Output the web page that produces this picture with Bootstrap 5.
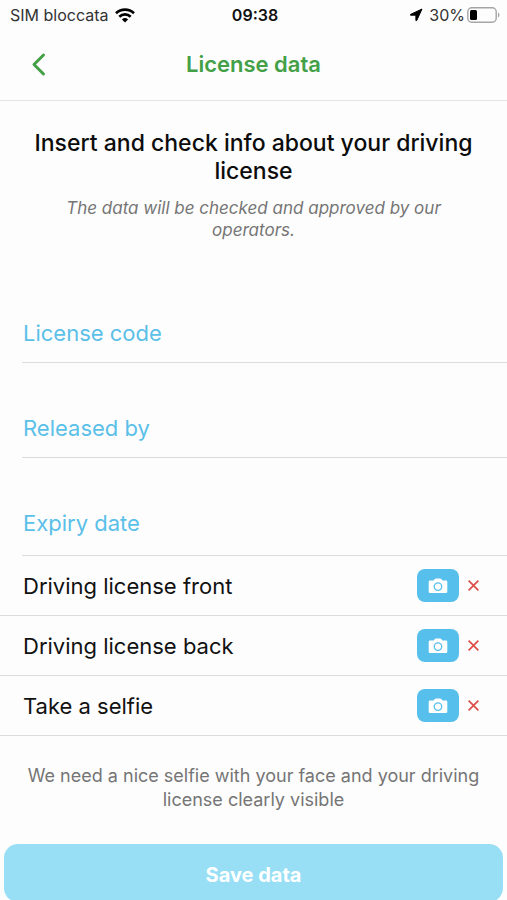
<!DOCTYPE html>
<html lang="en">
<head>
<meta charset="utf-8">
<meta name="viewport" content="width=device-width, initial-scale=1">
<title>License data</title>
<link href="https://cdn.jsdelivr.net/npm/bootstrap@5.3.0/dist/css/bootstrap.min.css" rel="stylesheet">
<style>
  body { font-family: Inter, "Liberation Sans", sans-serif; background: #fdfdfd; color: #111; }
  svg { display: block; }
  .status-bar { height: 30px; font-size: 16px; line-height: 20px; padding: 0 7px 0 10px; color: #333; }
  .status-group { gap: 6px; }
  .battery-group { gap: 2px; }
  .status-time { font-weight: 600; color: #111; }
  .app-header { height: 71px; padding: 0 24px 2px; border-bottom: 1px solid #e4e4e6; }
  .side-slot { width: 32px; height: 32px; }
  .app-title { font-size: 22px; line-height: 28px; font-weight: 600; color: #43a047; }
  .intro { padding: 28px 24px 27px; }
  .intro-title { font-size: 23px; line-height: 28px; font-weight: 500; color: #0c0c0c; margin-bottom: 12px; }
  .intro-note { font-size: 17px; line-height: 22px; color: #757575; padding: 0 24px; }
  .field { margin-left: 22px; padding-top: 35px; border-bottom: 1px solid #dcdcde; }
  .field:last-child { padding-bottom: 3px; }
  .field > * { grid-area: 1 / 1; }
  .field label { font-size: 22px; line-height: 28px; color: #5bc0e8; padding-left: 1px; pointer-events: none; }
  .field input { height: 59px; font-size: 22px; }
  .field input:focus + label, .field input:not(:placeholder-shown) + label { visibility: hidden; }
  .photo-row { height: 60px; padding: 0 27px 0 23px; border-bottom: 1px solid #dcdcde; font-size: 22px; line-height: 28px; }
  .btn-photo { width: 42px; height: 33px; border-radius: 8px; background: #56bfec; color: #fff; }
  .hint { font-size: 18px; line-height: 24px; color: #757575; padding: 28px 20px 32px; }
  .btn-save { height: 58px; border-radius: 14px; background: #98dff6; color: #fff; font-size: 20px; font-weight: 700; }
  .btn-photo:hover, .btn-save:hover { background: #45b3e2; color: #fff; }
</style>
<script src="https://cdn.jsdelivr.net/npm/bootstrap@5.3.0/dist/js/bootstrap.bundle.min.js"></script>
</head>
<body>
<div class="status-bar row g-0 align-items-center">
  <div class="col d-flex align-items-center status-group">
    <span>SIM bloccata</span>
    <svg width="20" height="15" viewBox="0 0 20 15" fill="none" stroke="#000" stroke-width="2.6" aria-hidden="true"><path d="M1 5.2a13 13 0 0 1 18 0"/><path d="M4.3 8.7a8.2 8.2 0 0 1 11.4 0"/><path d="M10 14.6l-3.1-3.1a4.5 4.5 0 0 1 6.2 0z" fill="#000" stroke="none"/></svg>
  </div>
  <div class="col-auto status-time">09:38</div>
  <div class="col d-flex align-items-center justify-content-end status-group">
    <svg width="14" height="14" viewBox="0 0 14 14" aria-hidden="true"><path d="M13 1L1.500 6.400v.8h5.400v5.400h.8z" fill="#000" stroke="#000" stroke-linejoin="round"/></svg>
    <div class="d-flex align-items-center battery-group">
      <span>30%</span>
      <svg width="33" height="16" viewBox="0 0 33 16" aria-hidden="true"><rect x=".8" y=".8" width="28.4" height="14.4" rx="4" fill="none" stroke="#a5a5a5" stroke-width="1.4"/><rect x="3" y="3" width="7" height="10" rx="1.5" fill="#000"/><path d="M31 5.5v5q1.5-.7 1.5-2.5T31 5.5z" fill="#a5a5a5"/></svg>
    </div>
  </div>
</div>
<header class="app-header d-flex align-items-center justify-content-between">
  <button type="button" class="side-slot btn p-0 border-0" aria-label="Back">
    <svg width="32" height="32" viewBox="0 0 32 32" fill="none" stroke="#43a047" stroke-width="3" stroke-linecap="round" stroke-linejoin="round" aria-hidden="true"><path d="M19.500 7L10 16.500l9.500 9.500"/></svg>
  </button>
  <h1 class="app-title m-0">License data</h1>
  <span class="side-slot"></span>
</header>
<main>
  <section class="intro text-center">
    <h2 class="intro-title">Insert and check info about your driving license</h2>
    <p class="intro-note fst-italic m-0">The data will be checked and approved by our operators.</p>
  </section>
  <form>
    <div>
      <div class="field d-grid align-items-center">
        <input class="form-control border-0 bg-transparent shadow-none p-0" type="text" id="code" placeholder=" ">
        <label for="code">License code</label>
      </div>
      <div class="field d-grid align-items-center">
        <input class="form-control border-0 bg-transparent shadow-none p-0" type="text" id="issuer" placeholder=" ">
        <label for="issuer">Released by</label>
      </div>
      <div class="field d-grid align-items-center">
        <input class="form-control border-0 bg-transparent shadow-none p-0" type="text" id="expiry" placeholder=" ">
        <label for="expiry">Expiry date</label>
      </div>
    </div>
    <svg class="d-none" aria-hidden="true">
      <symbol id="camera" viewBox="0 0 20 16"><path fill-rule="evenodd" fill="currentColor" d="M2 2.5h3.6L6.8.9Q7.200.4 7.900.4h4.300q.7 0 1.100.5l1.200 1.600H18q1.300 0 1.300 1.300v10q0 1.300-1.300 1.300H2Q.7 15.100.7 13.800v-10Q.7 2.500 2 2.500zM10 4.200a4.400 4.400 0 1 0 0 8.800a4.400 4.400 0 0 0 0-8.800zM10 5.500a3.100 3.100 0 1 1 0 6.200a3.100 3.100 0 0 1 0-6.200z"/></symbol>
      <symbol id="cross" viewBox="0 0 12 12"><path d="M1.500 1.500l9 9M10.500 1.500l-9 9" stroke="#dc4b45" stroke-width="1.500" fill="none"/></symbol>
    </svg>
    <div class="photo-row d-flex align-items-center">
      <span class="flex-grow-1">Driving license front</span>
      <button type="button" class="btn-photo btn border-0 p-0 d-flex align-items-center justify-content-center me-2" aria-label="Photograph license front"><svg width="20" height="16"><use href="#camera"/></svg></button>
      <svg width="13" height="13" aria-hidden="true"><use href="#cross"/></svg>
    </div>
    <div class="photo-row d-flex align-items-center">
      <span class="flex-grow-1">Driving license back</span>
      <button type="button" class="btn-photo btn border-0 p-0 d-flex align-items-center justify-content-center me-2" aria-label="Photograph license back"><svg width="20" height="16"><use href="#camera"/></svg></button>
      <svg width="13" height="13" aria-hidden="true"><use href="#cross"/></svg>
    </div>
    <div class="photo-row d-flex align-items-center">
      <span class="flex-grow-1">Take a selfie</span>
      <button type="button" class="btn-photo btn border-0 p-0 d-flex align-items-center justify-content-center me-2" aria-label="Photograph selfie"><svg width="20" height="16"><use href="#camera"/></svg></button>
      <svg width="13" height="13" aria-hidden="true"><use href="#cross"/></svg>
    </div>
    <p class="hint text-center m-0">We need a nice selfie with your face and your driving license clearly visible</p>
    <div class="px-1"><button type="button" class="btn-save btn border-0 w-100 p-0 pt-1">Save data</button></div>
  </form>
</main>
</body>
</html>
